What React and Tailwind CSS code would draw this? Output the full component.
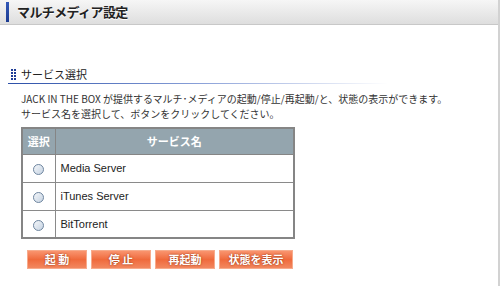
import React from 'react';

const jp = { fontFamily: '"Noto Sans CJK JP", "Liberation Sans", sans-serif' };

const services = ['Media Server', 'iTunes Server', 'BitTorrent'];
const buttons = [
  { label: '起 動', w: 'w-[60px]' },
  { label: '停 止', w: 'w-[60px]' },
  { label: '再起動', w: 'w-[60px]' },
  { label: '状態を表示', w: 'w-[74px]' },
];

function Radio() {
  return (
    <span className="inline-block w-[11px] h-[11px] rounded-full border border-[#6f86a0] bg-gradient-to-br from-[#f4f7fa] to-[#c6d3e2]" />
  );
}

function SectionIcon() {
  return (
    <div className="grid grid-cols-2 gap-px w-[5px] mr-[5px]">
      {Array.from({ length: 8 }).map((_, i) => (
        <span key={i} className="block w-[2px] h-[2px] bg-[#1e3c96]" />
      ))}
    </div>
  );
}

export default function App() {
  return (
    <div className="w-[500px] h-[286px] bg-white border-r-2 border-[#d2d2d2] overflow-hidden text-[#333]" style={jp}>
      {/* Title bar */}
      <div className="h-[25px] flex items-center bg-gradient-to-b from-[#f6f6f6] to-[#dedede] border-b border-[#c8c8c8]">
        <span className="ml-[6px] w-[3px] h-[20px] bg-gradient-to-b from-[#3358b8] to-[#1a3a90]" />
        <h1 className="ml-[8px] text-[13px] font-bold text-[#222] tracking-[-0.6px] [text-shadow:0_1px_0_#fff]">マルチメディア設定</h1>
      </div>

      {/* Section */}
      <div className="mt-[43px] pl-[11px]">
        <div className="flex items-center h-[13px]">
          <SectionIcon />
          <span className="text-[11px] text-[#222] leading-none">サービス選択</span>
        </div>
        <div className="mt-[2px] ml-[-3px] h-px w-[380px] bg-gradient-to-r from-[#2c4fa8] via-[#8aa0d8] to-transparent" />
      </div>

      <div className="pl-[21px] mt-[8px] text-[10px] leading-[14.5px] text-[#333]">
        <p>JACK IN THE BOX が提供するマルチ･メディアの起動/停止/再起動/と、状態の表示ができます。</p>
        <p>サービス名を選択して、ボタンをクリックしてください。</p>
      </div>

      {/* Table */}
      <table className="ml-[21px] mt-[6px] w-[274px] border-collapse border-2 border-[#858585]">
        <thead>
          <tr className="h-[26px] bg-[#94a5ae] text-white text-[11px] font-bold">
            <th className="w-[33px] border border-[#858585] font-bold">選択</th>
            <th className="border border-[#858585] font-bold">サービス名</th>
          </tr>
        </thead>
        <tbody>
          {services.map((s) => (
            <tr key={s} className="h-[28px]">
              <td className="border border-[#8a8a8a] text-center align-middle">
                <Radio />
              </td>
              <td className="border border-[#8a8a8a] pl-[5px] text-[11px] text-[#222]" style={{ fontFamily: '"Liberation Sans", sans-serif' }}>
                {s}
              </td>
            </tr>
          ))}
        </tbody>
      </table>

      {/* Buttons */}
      <div className="flex gap-[4px] ml-[27px] mt-[11px]">
        {buttons.map((b) => (
          <button
            key={b.label}
            className={`${b.w} h-[19px] border border-[#f7ab8c] bg-gradient-to-b from-[#f9946e] via-[#ef6a3c] to-[#f2875f] text-white text-[11px] font-bold leading-none whitespace-pre [text-shadow:0_0_2px_#8a2a08]`}
          >
            {b.label}
          </button>
        ))}
      </div>
    </div>
  );
}
